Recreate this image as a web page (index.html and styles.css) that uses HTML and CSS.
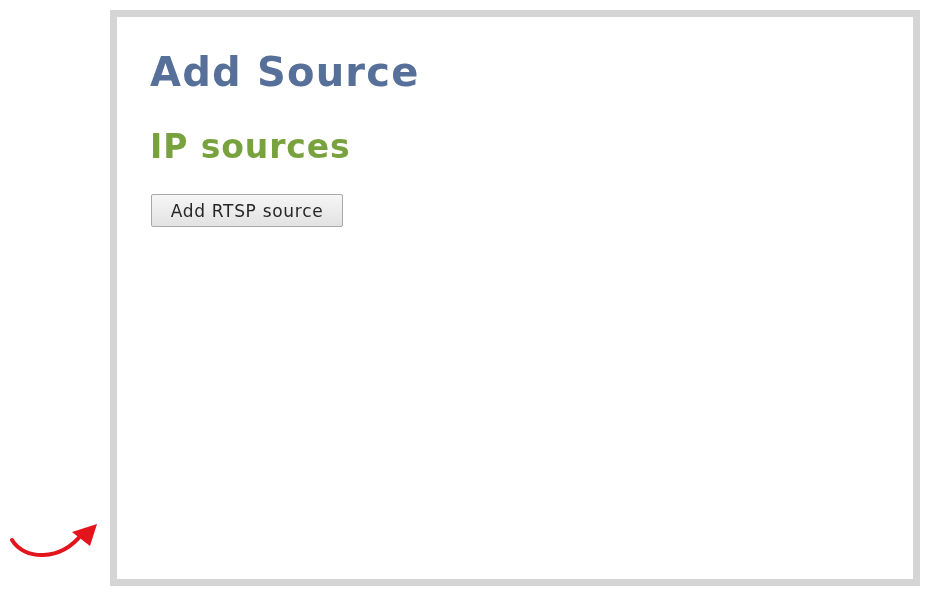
FILE: index.html
```html
<!DOCTYPE html>
<html lang="en">
<head>
<meta charset="utf-8">
<title>Add Source</title>
<link rel="stylesheet" href="styles.css">
</head>
<body>
  <div class="stage">
    <div class="pointer">
      <svg class="pointer-arrow" width="100" height="60" viewBox="0 0 100 60" aria-hidden="true">
        <path d="M12 40 C 24 60, 60 62, 82 34" fill="none" stroke="#e3141b" stroke-width="4" stroke-linecap="round"/>
        <path d="M97 24 L 72 32 L 90 46 Z" fill="#e3141b"/>
      </svg>
    </div>
    <section class="panel">
      <h1 class="panel-title">Add Source</h1>
      <h2 class="panel-subtitle">IP sources</h2>
      <button class="btn" type="button">Add RTSP source</button>
    </section>
  </div>
</body>
</html>
```

FILE: styles.css
```css
html, body {
  margin: 0;
  padding: 0;
  background: #ffffff;
}

body {
  font-family: "DejaVu Sans", Verdana, sans-serif;
  width: 929px;
  height: 593px;
  overflow: hidden;
}

.stage {
  display: flex;
  align-items: flex-start;
  padding-top: 10px;
}

/* callout arrow sitting beside the panel's lower-left corner */
.pointer {
  width: 110px;
  height: 576px;
  display: flex;
  align-items: flex-end;
  flex: none;
}

.pointer-arrow {
  display: block;
  margin-bottom: 26px;
  filter: blur(0.5px);
}

.panel {
  box-sizing: border-box;
  width: 810px;
  height: 576px;
  border: 7px solid #d5d5d5;
  padding: 35px 0 0 33px;
  background: #fff;
  filter: blur(0.45px);
}

.panel-title {
  margin: 0;
  font-size: 40px;
  line-height: 40px;
  font-weight: bold;
  letter-spacing: 1.2px;
  color: #56709a;
}

.panel-subtitle {
  margin: 38px 0 0;
  font-size: 33px;
  line-height: 33px;
  font-weight: bold;
  letter-spacing: 0.9px;
  color: #78a23e;
}

.btn {
  display: block;
  margin-top: 31px;
  margin-left: 1px;
  box-sizing: border-box;
  width: 192px;
  height: 33px;
  padding: 0;
  font-family: "DejaVu Sans", Verdana, sans-serif;
  font-size: 17px;
  letter-spacing: 0.7px;
  color: #262626;
  background: linear-gradient(#f6f6f6, #e2e2e2);
  border: 1px solid #a9a9a9;
  border-radius: 2px;
}
```
